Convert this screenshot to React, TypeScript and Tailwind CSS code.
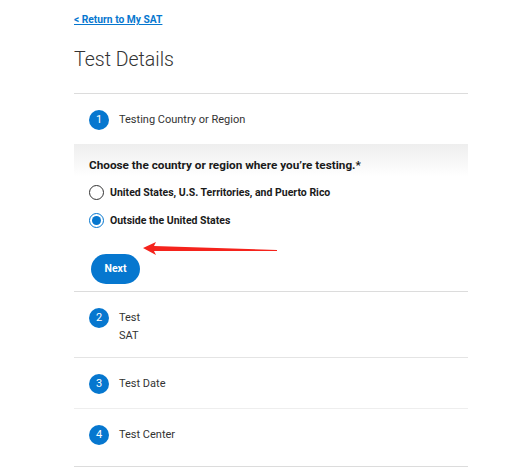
import React from "react";

function Step({ n, title, sub }: { n: number; title: string; sub?: string }) {
  return (
    <div className="flex items-start gap-[10px] pl-[15px] pt-[16px]">
      <div className="flex h-[20px] w-[20px] shrink-0 items-center justify-center rounded-full bg-[#0677cf] text-[11px] text-white">
        {n}
      </div>
      <div className="flex flex-col">
        <div className="text-[11px] leading-[20px] text-[#333]">{title}</div>
        {sub && <div className="mt-[-2px] text-[11px] leading-[20px] text-[#333]">{sub}</div>}
      </div>
    </div>
  );
}

export default function App() {
  return (
    <div className="relative min-h-[467px] w-[517px] bg-white" style={{ fontFamily: "Roboto, 'Liberation Sans', sans-serif" }}>
      <div className="ml-[74px] w-[394px] pt-[6px]">
        <a href="#" className="text-[10.25px] font-bold leading-[14px] text-[#0677cf] underline">
          &lt; Return to My SAT
        </a>
        <h1 className="mt-[17px] text-[19.5px] font-light leading-[26px] text-[#333]">Test Details</h1>
        <div className="mt-[20px] h-[1px] bg-[#dcdcdc]" />
        <div className="h-[50px]">
          <Step n={1} title="Testing Country or Region" />
        </div>
        <div className="h-[147px] bg-gradient-to-b from-[#eeeeee] to-white to-[22%] pl-[15px] pt-[14px]">
          <div className="text-[11.75px] font-bold leading-[14px] text-[#1a1a1a]">
            Choose the country or region where you’re testing.*
          </div>
          <div className="mt-[13px] flex items-center gap-[6px]">
            <div className="h-[15px] w-[15px] rounded-full border border-[#333] bg-white" />
            <span className="text-[10.5px] font-bold text-[#1a1a1a]">United States, U.S. Territories, and Puerto Rico</span>
          </div>
          <div className="mt-[12px] flex items-center gap-[6px]">
            <div className="flex h-[15px] w-[15px] items-center justify-center rounded-full border-[1.5px] border-[#0677cf] bg-white">
              <div className="h-[9px] w-[9px] rounded-full bg-[#0677cf]" />
            </div>
            <span className="text-[10.5px] font-bold text-[#1a1a1a]">Outside the United States</span>
          </div>
          <button className="ml-[2px] mt-[25px] flex h-[30px] w-[49px] items-center justify-center rounded-full bg-[#0677cf] text-[10.5px] font-bold text-white">
            Next
          </button>
        </div>
        <div className="h-[1px] bg-[#dcdcdc]" />
        <div className="h-[65px]">
          <Step n={2} title="Test" sub="SAT" />
        </div>
        <div className="h-[1px] bg-[#e4e4e4]" />
        <div className="h-[50px]">
          <Step n={3} title="Test Date" />
        </div>
        <div className="h-[1px] bg-[#eeeeee]" />
        <div className="h-[57px]">
          <Step n={4} title="Test Center" />
        </div>
        <div className="h-[1px] bg-[#dcdcdc]" />
      </div>
      <svg className="absolute left-[140px] top-[240px]" width="145" height="20" viewBox="0 0 145 20">
        <path d="M3 8 L16 2 L14 6 L137 10 L137 11 L14 11 L16 15 Z" fill="#f5231c" />
      </svg>
    </div>
  );
}
